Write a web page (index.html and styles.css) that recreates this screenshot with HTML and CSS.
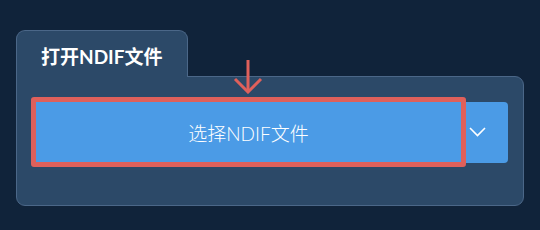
FILE: index.html
```html
<!DOCTYPE html>
<html>

<head>
    <meta charset="utf-8">
    <link rel="stylesheet" href="styles.css">
    <title>打开NDIF文件</title>
</head>

<body>

    <div class="page">
        <div class="tab">打开NDIF文件</div>

        <div class="panel">
            <div class="hint_arrow">
                <svg width="30" height="34" viewBox="0 0 30 34">
                    <line x1="15" y1="0" x2="15" y2="32" stroke="#df605b" stroke-width="3" />
                    <polyline points="2,19 15,32 28,19" fill="none" stroke="#df605b" stroke-width="3" />
                </svg>
            </div>

            <div class="button_group">
                <div class="highlight">
                    <button class="open_button">选择NDIF文件</button>
                </div>
                <button class="menu_button">
                    <svg width="17" height="10" viewBox="0 0 17 10">
                        <polyline points="1,1 8.5,8.5 16,1" fill="none" stroke="#ffffff" stroke-width="1.6" />
                    </svg>
                </button>
            </div>
        </div>
    </div>

</body>

</html>
```

FILE: styles.css
```css
html,
body {
    margin: 0;
    background: #10233a;
    font-family: "Lato", "Noto Sans CJK SC", sans-serif;
}

.page {
    padding: 30px 0 0 16px;
    width: 508px;
}

.tab {
    position: relative;
    z-index: 1;
    box-sizing: border-box;
    width: 172px;
    height: 47px;
    margin-bottom: -1px;
    padding: 14px 0 0 24px;

    background: #2c4968;
    border: 1px solid #4b6788;
    border-bottom: none;
    border-radius: 9px 9px 0 0;

    color: #ffffff;
    font-size: 19px;
    font-weight: bold;
    line-height: 24px;
}

.panel {
    position: relative;
    box-sizing: border-box;
    height: 130px;
    padding: 20px 0 0 14px;

    background: #2c4968;
    border: 1px solid #4b6788;
    border-radius: 0 9px 9px 9px;
}

.hint_arrow {
    position: absolute;
    left: 216px;
    top: -17px;
    height: 34px;
}

.button_group {
    display: flex;
    align-items: flex-start;
}

.highlight {
    display: flex;
    border: 5px solid #df605b;
    border-radius: 3px;
}

.open_button {
    width: 425px;
    height: 60px;
    padding: 0;

    background: #4b9be6;
    border: none;
    border-radius: 0;

    color: #ffffff;
    font-family: "Lato", "Noto Sans CJK SC", sans-serif;
    font-size: 19px;
    font-weight: 300;
}

.menu_button {
    display: flex;
    align-items: center;
    width: 42px;
    height: 61px;
    margin-top: 5px;
    padding: 0 0 1px 3px;

    background: #4b9be6;
    border: none;
    border-radius: 0 4px 4px 0;
}
```
